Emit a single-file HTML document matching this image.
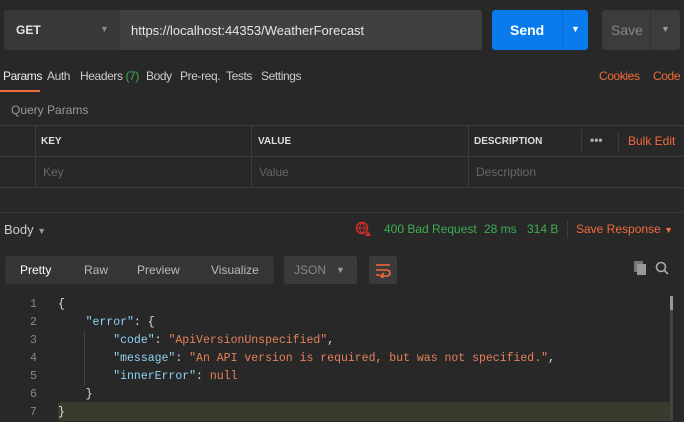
<!DOCTYPE html><html><head><style>
*{margin:0;padding:0;box-sizing:border-box}
body{width:684px;height:421px;background:#282828;font-family:"Liberation Sans",sans-serif;font-size:12px;color:#ccc;position:relative;overflow:hidden}
.a{position:absolute;white-space:nowrap}
.mono{font-family:"Liberation Mono",monospace;font-size:11.5px}
.h{border-top:1px solid #3c3c3c;position:absolute;left:0;width:684px}
.v{border-left:1px solid #3c3c3c;position:absolute}
.t{position:absolute;top:69px;font-size:12px;color:#ccc;letter-spacing:-0.4px;white-space:nowrap}
</style></head><body>
<div class="a" style="left:4px;top:10px;width:116px;height:40px;background:#383838;border-radius:3px 0 0 3px"></div>
<div class="a" style="left:16px;top:23px;font-weight:bold;color:#e6e6e6">GET</div>
<div class="a" style="left:100px;top:24px;font-size:9px;color:#888">▼</div>
<div class="a" style="left:120px;top:10px;width:362px;height:40px;background:#404040;border-radius:0 3px 3px 0"></div>
<div class="a" style="left:131px;top:23px;color:#e6e6e6;font-size:13px">https://localhost:44353/WeatherForecast</div>
<div class="a" style="left:492px;top:10px;width:96px;height:40px;background:#097bed;border-radius:3px"></div>
<div class="a" style="left:562px;top:10px;width:1px;height:40px;background:#0a6ad0"></div>
<div class="a" style="left:510px;top:22px;color:#fff;font-weight:bold;font-size:14px">Send</div>
<div class="a" style="left:571px;top:24px;color:#fff;font-size:9px">▼</div>
<div class="a" style="left:602px;top:10px;width:78px;height:40px;background:#3c3c3c;border-radius:3px"></div>
<div class="a" style="left:650px;top:10px;width:1px;height:40px;background:#333"></div>
<div class="a" style="left:611px;top:22px;color:#888;font-size:14px">Save</div>
<div class="a" style="left:661px;top:24px;color:#999;font-size:9px">▼</div>
<div class="t" style="left:3px;color:#eee">Params</div>
<div class="a" style="left:0;top:90px;width:40px;height:2px;background:#f26b3a"></div>
<div class="t" style="left:47px">Auth</div>
<div class="t" style="left:80px">Headers <span style="color:#3cae53">(7)</span></div>
<div class="t" style="left:146px">Body</div>
<div class="t" style="left:180px">Pre-req.</div>
<div class="t" style="left:226px">Tests</div>
<div class="t" style="left:261px">Settings</div>
<div class="t" style="left:599px;color:#f26b3a">Cookies</div>
<div class="t" style="left:653px;color:#f26b3a">Code</div>
<div class="a" style="left:11px;top:103px;color:#999">Query Params</div>
<div class="h" style="top:125px"></div><div class="h" style="top:156px"></div><div class="h" style="top:187px"></div>
<div class="v" style="left:35px;top:125px;height:62px"></div>
<div class="v" style="left:251px;top:125px;height:62px"></div>
<div class="v" style="left:468px;top:125px;height:62px"></div>
<div class="v" style="left:581px;top:130px;height:22px"></div>
<div class="v" style="left:618px;top:132px;height:20px"></div>
<div class="a" style="left:41px;top:136px;font-size:10px;font-weight:bold;color:#ddd">KEY</div>
<div class="a" style="left:258px;top:136px;font-size:10px;font-weight:bold;color:#ddd">VALUE</div>
<div class="a" style="left:474px;top:136px;font-size:10px;font-weight:bold;color:#ddd">DESCRIPTION</div>
<div class="a" style="left:590px;top:133px;color:#aaa;font-weight:bold">•••</div>
<div class="a" style="left:628px;top:134px;color:#f26b3a">Bulk Edit</div>
<div class="a" style="left:43px;top:165px;color:#666">Key</div>
<div class="a" style="left:259px;top:165px;color:#666">Value</div>
<div class="a" style="left:476px;top:165px;color:#666">Description</div>
<div class="h" style="top:212px;border-color:#3a3a3a"></div>
<div class="a" style="left:4px;top:222px;color:#ccc;font-size:13px">Body <span style="font-size:9px;color:#999">▼</span></div>
<svg class="a" style="left:355px;top:221px" width="16" height="16"><circle cx="7" cy="7" r="5.5" stroke="#d32f2f" stroke-width="1.5" fill="none"/><path d="M1.5 7h11M7 1.5c-3 3-3 8 0 11M7 1.5c3 3 3 8 0 11" stroke="#d32f2f" stroke-width="1" fill="none"/><path d="M10 15l3-5 3 5z" fill="#d32f2f"/></svg>
<div class="a" style="left:384px;top:222px;color:#3cae53">400 Bad Request</div>
<div class="a" style="left:484px;top:222px;color:#3cae53">28 ms</div>
<div class="a" style="left:527px;top:222px;color:#3cae53">314 B</div>
<div class="v" style="left:567px;top:220px;height:18px"></div>
<div class="a" style="left:576px;top:222px;color:#f26b3a">Save Response <span style="font-size:9px">▼</span></div>
<div class="a" style="left:5px;top:256px;width:269px;height:28px;background:#353535;border-radius:3px"></div>
<div class="a" style="left:20px;top:263px;color:#fff">Pretty</div>
<div class="a" style="left:84px;top:263px;color:#bbb">Raw</div>
<div class="a" style="left:137px;top:263px;color:#bbb">Preview</div>
<div class="a" style="left:211px;top:263px;color:#bbb">Visualize</div>
<div class="a" style="left:284px;top:256px;width:73px;height:28px;background:#3a3a3a;border-radius:3px"></div>
<div class="a" style="left:294px;top:263px;color:#888">JSON</div>
<div class="a" style="left:336px;top:265px;font-size:9px;color:#999">▼</div>
<div class="a" style="left:369px;top:256px;width:28px;height:28px;background:#3a3a3a;border-radius:3px"></div>
<svg class="a" style="left:374px;top:262px" width="18" height="16"><path d="M2 3h14M2 8h11a3 3 0 0 1 0 6H8M10 11l-3 3 3 3M2 13h4" stroke="#f26b3a" stroke-width="1.6" fill="none"/></svg>
<div class="a" style="left:634px;top:261px;width:9px;height:11px;background:#777"></div>
<div class="a" style="left:637px;top:264px;width:9px;height:11px;background:#999"></div>
<svg class="a" style="left:655px;top:261px" width="14" height="14"><circle cx="6" cy="6" r="4.5" stroke="#aaa" stroke-width="1.6" fill="none"/><path d="M9 9l4 4" stroke="#aaa" stroke-width="1.8"/></svg>
<div class="a" style="left:58px;top:402px;width:612px;height:19px;background:#3a3a2e"></div>
<div class="a" style="left:670px;top:296px;width:3px;height:125px;background:#444"></div>
<div class="a" style="left:670px;top:296px;width:3px;height:14px;background:#999"></div>
<div class="a" style="left:84px;top:332px;height:54px;border-left:1px solid #444"></div>
<div class="a mono" style="left:30px;top:296px;line-height:18px;color:#888;text-align:right">1<br>2<br>3<br>4<br>5<br>6<br>7</div>
<div class="a mono" style="left:58px;top:296px;line-height:18px;color:#ddd">{<br>&nbsp;&nbsp;&nbsp;&nbsp;<span style="color:#8fd3f5">"error"</span>: {<br>&nbsp;&nbsp;&nbsp;&nbsp;&nbsp;&nbsp;&nbsp;&nbsp;<span style="color:#8fd3f5">"code"</span>: <span style="color:#e3815a">"ApiVersionUnspecified"</span>,<br>&nbsp;&nbsp;&nbsp;&nbsp;&nbsp;&nbsp;&nbsp;&nbsp;<span style="color:#8fd3f5">"message"</span>: <span style="color:#e3815a">"An API version is required, but was not specified."</span>,<br>&nbsp;&nbsp;&nbsp;&nbsp;&nbsp;&nbsp;&nbsp;&nbsp;<span style="color:#8fd3f5">"innerError"</span>: <span style="color:#e3815a">null</span><br>&nbsp;&nbsp;&nbsp;&nbsp;}<br>}</div>
</body></html>
